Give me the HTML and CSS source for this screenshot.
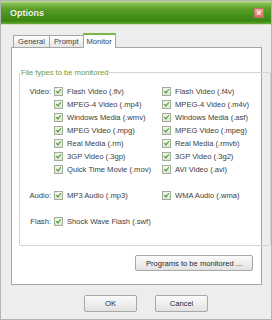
FILE: index.html
```html
<!DOCTYPE html>
<html lang="en">
<head>
  <meta charset="UTF-8" />
  <title>Options</title>
  <link rel="stylesheet" href="styles.css">
</head>
<body>

<div class="window">
  <div class="titlebar">
    <span class="title">Options</span>
    <span class="close">&#215;</span>
  </div>

  <div class="content">
    <div class="tabs">
      <span class="tab">General</span>
      <span class="tab">Prompt</span>
      <span class="tab active">Monitor</span>
    </div>

    <div class="panel">
      <fieldset class="group">
        <legend>File types to be monitored</legend>

        <div class="section">
          <div class="row">
            <span class="kind">Video:</span>
            <label class="item"><span class="cb"></span>Flash Video (.flv)</label>
            <label class="item"><span class="cb"></span>Flash Video (.f4v)</label>
          </div>
          <div class="row">
            <span class="kind"></span>
            <label class="item"><span class="cb"></span>MPEG-4 Video (.mp4)</label>
            <label class="item"><span class="cb"></span>MPEG-4 Video (.m4v)</label>
          </div>
          <div class="row">
            <span class="kind"></span>
            <label class="item"><span class="cb"></span>Windows Media (.wmv)</label>
            <label class="item"><span class="cb"></span>Windows Media (.asf)</label>
          </div>
          <div class="row">
            <span class="kind"></span>
            <label class="item"><span class="cb"></span>MPEG Video (.mpg)</label>
            <label class="item"><span class="cb"></span>MPEG Video (.mpeg)</label>
          </div>
          <div class="row">
            <span class="kind"></span>
            <label class="item"><span class="cb"></span>Real Media (.rm)</label>
            <label class="item"><span class="cb"></span>Real Media (.rmvb)</label>
          </div>
          <div class="row">
            <span class="kind"></span>
            <label class="item"><span class="cb"></span>3GP Video (.3gp)</label>
            <label class="item"><span class="cb"></span>3GP Video (.3g2)</label>
          </div>
          <div class="row">
            <span class="kind"></span>
            <label class="item"><span class="cb"></span>Quick Time Movie (.mov)</label>
            <label class="item"><span class="cb"></span>AVI Video (.avi)</label>
          </div>
        </div>

        <div class="section">
          <div class="row">
            <span class="kind">Audio:</span>
            <label class="item"><span class="cb"></span>MP3 Audio (.mp3)</label>
            <label class="item"><span class="cb"></span>WMA Audio (.wma)</label>
          </div>
        </div>

        <div class="section">
          <div class="row">
            <span class="kind">Flash:</span>
            <label class="item wide"><span class="cb"></span>Shock Wave Flash (.swf)</label>
          </div>
        </div>
      </fieldset>

      <div class="panel-footer">
        <button class="btn programs">Programs to be monitored ...</button>
      </div>
    </div>

    <div class="dialog-footer">
      <button class="btn">OK</button>
      <button class="btn">Cancel</button>
    </div>
  </div>
</div>

</body>
</html>
```

FILE: styles.css
```css
body {
  margin: 0;
  padding: 0;
  background: #fff;
  font-family: "Liberation Sans", Arial, sans-serif;
  font-size: 7.6px;
  color: #404040;
}

.window {
  width: 270px;
  height: 318px;
  background: #ededed;
  border: 1px solid #b4b4b4;
  display: flex;
  flex-direction: column;
}

.titlebar {
  height: 23px;
  display: flex;
  align-items: center;
  justify-content: space-between;
  padding: 0 7px 0 9px;
  background: linear-gradient(#c8e3a8 0, #8cc258 2px, #5a9e26 8px, #44901a 15px, #3a8610 20px, #6aac38 23px);
  border-bottom: 1px solid #cfdcc4;
}

.title {
  color: #f4faee;
  font-weight: bold;
  font-size: 9px;
  text-shadow: 0 0 1px #2f6a0c;
}

.close {
  width: 8px;
  height: 8px;
  line-height: 8px;
  text-align: center;
  font-size: 9px;
  font-weight: bold;
  color: #fff;
  background: linear-gradient(#f0a8a0, #d8685c);
  border: 1px solid #b8766a;
  margin-top: 1px;
}

.content {
  flex: 1;
  padding: 10px 9px 0 10px;
}

.tabs {
  display: flex;
  align-items: flex-end;
  margin-left: 2px;
  height: 12px;
}

.tab {
  height: 11px;
  line-height: 11px;
  padding: 0 4px;
  border: 1px solid #a6a6a6;
  border-bottom: none;
  background: linear-gradient(#fefefe, #e6e6e6);
  margin-right: -1px;
}

.tab.active {
  height: 13px;
  line-height: 14px;
  padding: 0 3px;
  background: #fff;
  border-top: 2px solid #7cb848;
  margin-bottom: -1px;
  position: relative;
}

.panel {
  height: 236px;
  background: #fff;
  border: 1px solid #a6a6a6;
  padding: 0 7px;
}

.group {
  margin: 20px 0 0 0;
  padding: 8px 0 0 0;
  height: 168px;
  border: 1px solid #d4d4d4;
  border-radius: 2px;
}

.group legend {
  color: #6c9a3a;
  padding: 0 1px;
  margin-left: 0;
}

.section {
  margin-bottom: 13px;
}

.row {
  display: flex;
  align-items: center;
  height: 13px;
}

.kind {
  width: 31px;
  text-align: right;
  padding-right: 3px;
}

.item {
  width: 108px;
  display: flex;
  align-items: center;
  white-space: nowrap;
}

.cb {
  width: 7px;
  height: 7px;
  border: 1px solid #a3ad9a;
  background: linear-gradient(#f4f4f0, #dfe4da);
  margin-right: 4px;
  position: relative;
}

.cb::after {
  content: "";
  position: absolute;
  left: 2px;
  top: 0px;
  width: 2px;
  height: 4px;
  border-right: 1.5px solid #3e9a1e;
  border-bottom: 1.5px solid #3e9a1e;
  transform: rotate(40deg);
}

.panel-footer {
  display: flex;
  justify-content: flex-end;
  margin-top: 9px;
  padding-right: 1px;
}

.btn {
  font-family: "Liberation Sans", Arial, sans-serif;
  font-size: 7.6px;
  color: #2a2a2a;
  background: linear-gradient(#fbfbfb, #e2e2e2);
  border: 1px solid #a8a8a8;
  border-radius: 2px;
  height: 17px;
  width: 53px;
  padding: 0;
}

.btn.programs {
  width: 118px;
  height: 16px;
}

.dialog-footer {
  display: flex;
  justify-content: center;
  gap: 18px;
  padding: 10px 0 0 19px;
}
```
